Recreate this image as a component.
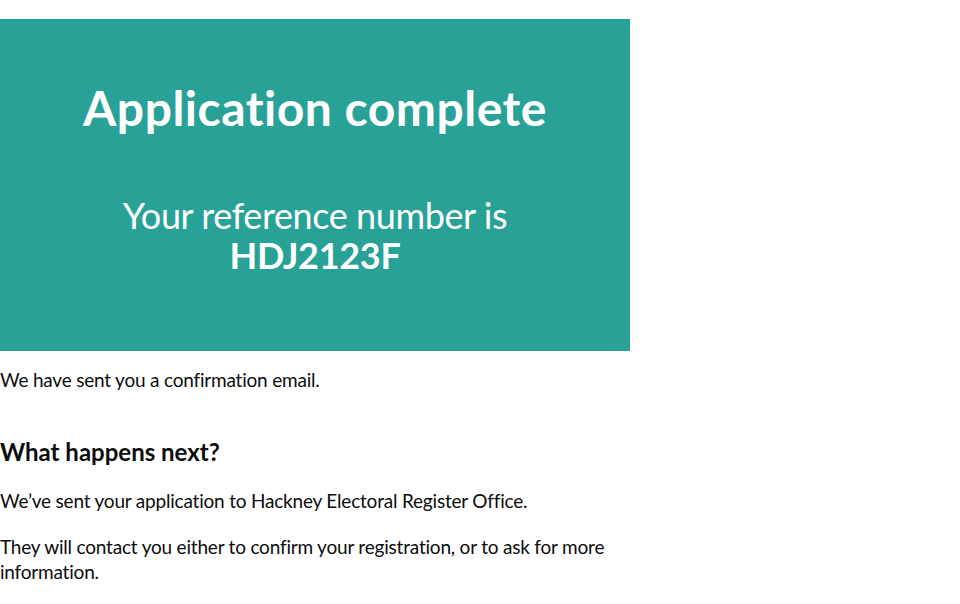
export default function App() {
  return (
    <div className="w-[630px] pt-[19px] font-['Lato',sans-serif] text-[#0b0c0c] [font-variant-ligatures:none]">
      {/* confirmation panel */}
      <div className="bg-[#28a197] text-white text-center pt-[64px] pb-[76px] px-[35px]">
        <h1 className="text-[48px] leading-[50px] font-bold tracking-[0.5px]">Application complete</h1>
        <div className="mt-[62px] text-[36px] leading-[40px] tracking-[-0.4px]">
          Your reference number is
          <br />
          <strong className="font-bold tracking-[-0.3px]">HDJ2123F</strong>
        </div>
      </div>

      <p className="mt-[16px] text-[19px] leading-[25px] tracking-[-0.2px]">We have sent you a confirmation email.</p>

      <h2 className="mt-[45px] text-[24px] leading-[30px] font-bold">What happens next?</h2>

      <p className="mt-[21px] text-[19px] leading-[25px] tracking-[-0.2px]">
        We’ve sent your application to Hackney Electoral Register Office.
      </p>
      <p className="mt-[21px] text-[19px] leading-[25px] tracking-[-0.2px]">
        They will contact you either to confirm your registration, or to ask for more information.
      </p>
    </div>
  )
}
